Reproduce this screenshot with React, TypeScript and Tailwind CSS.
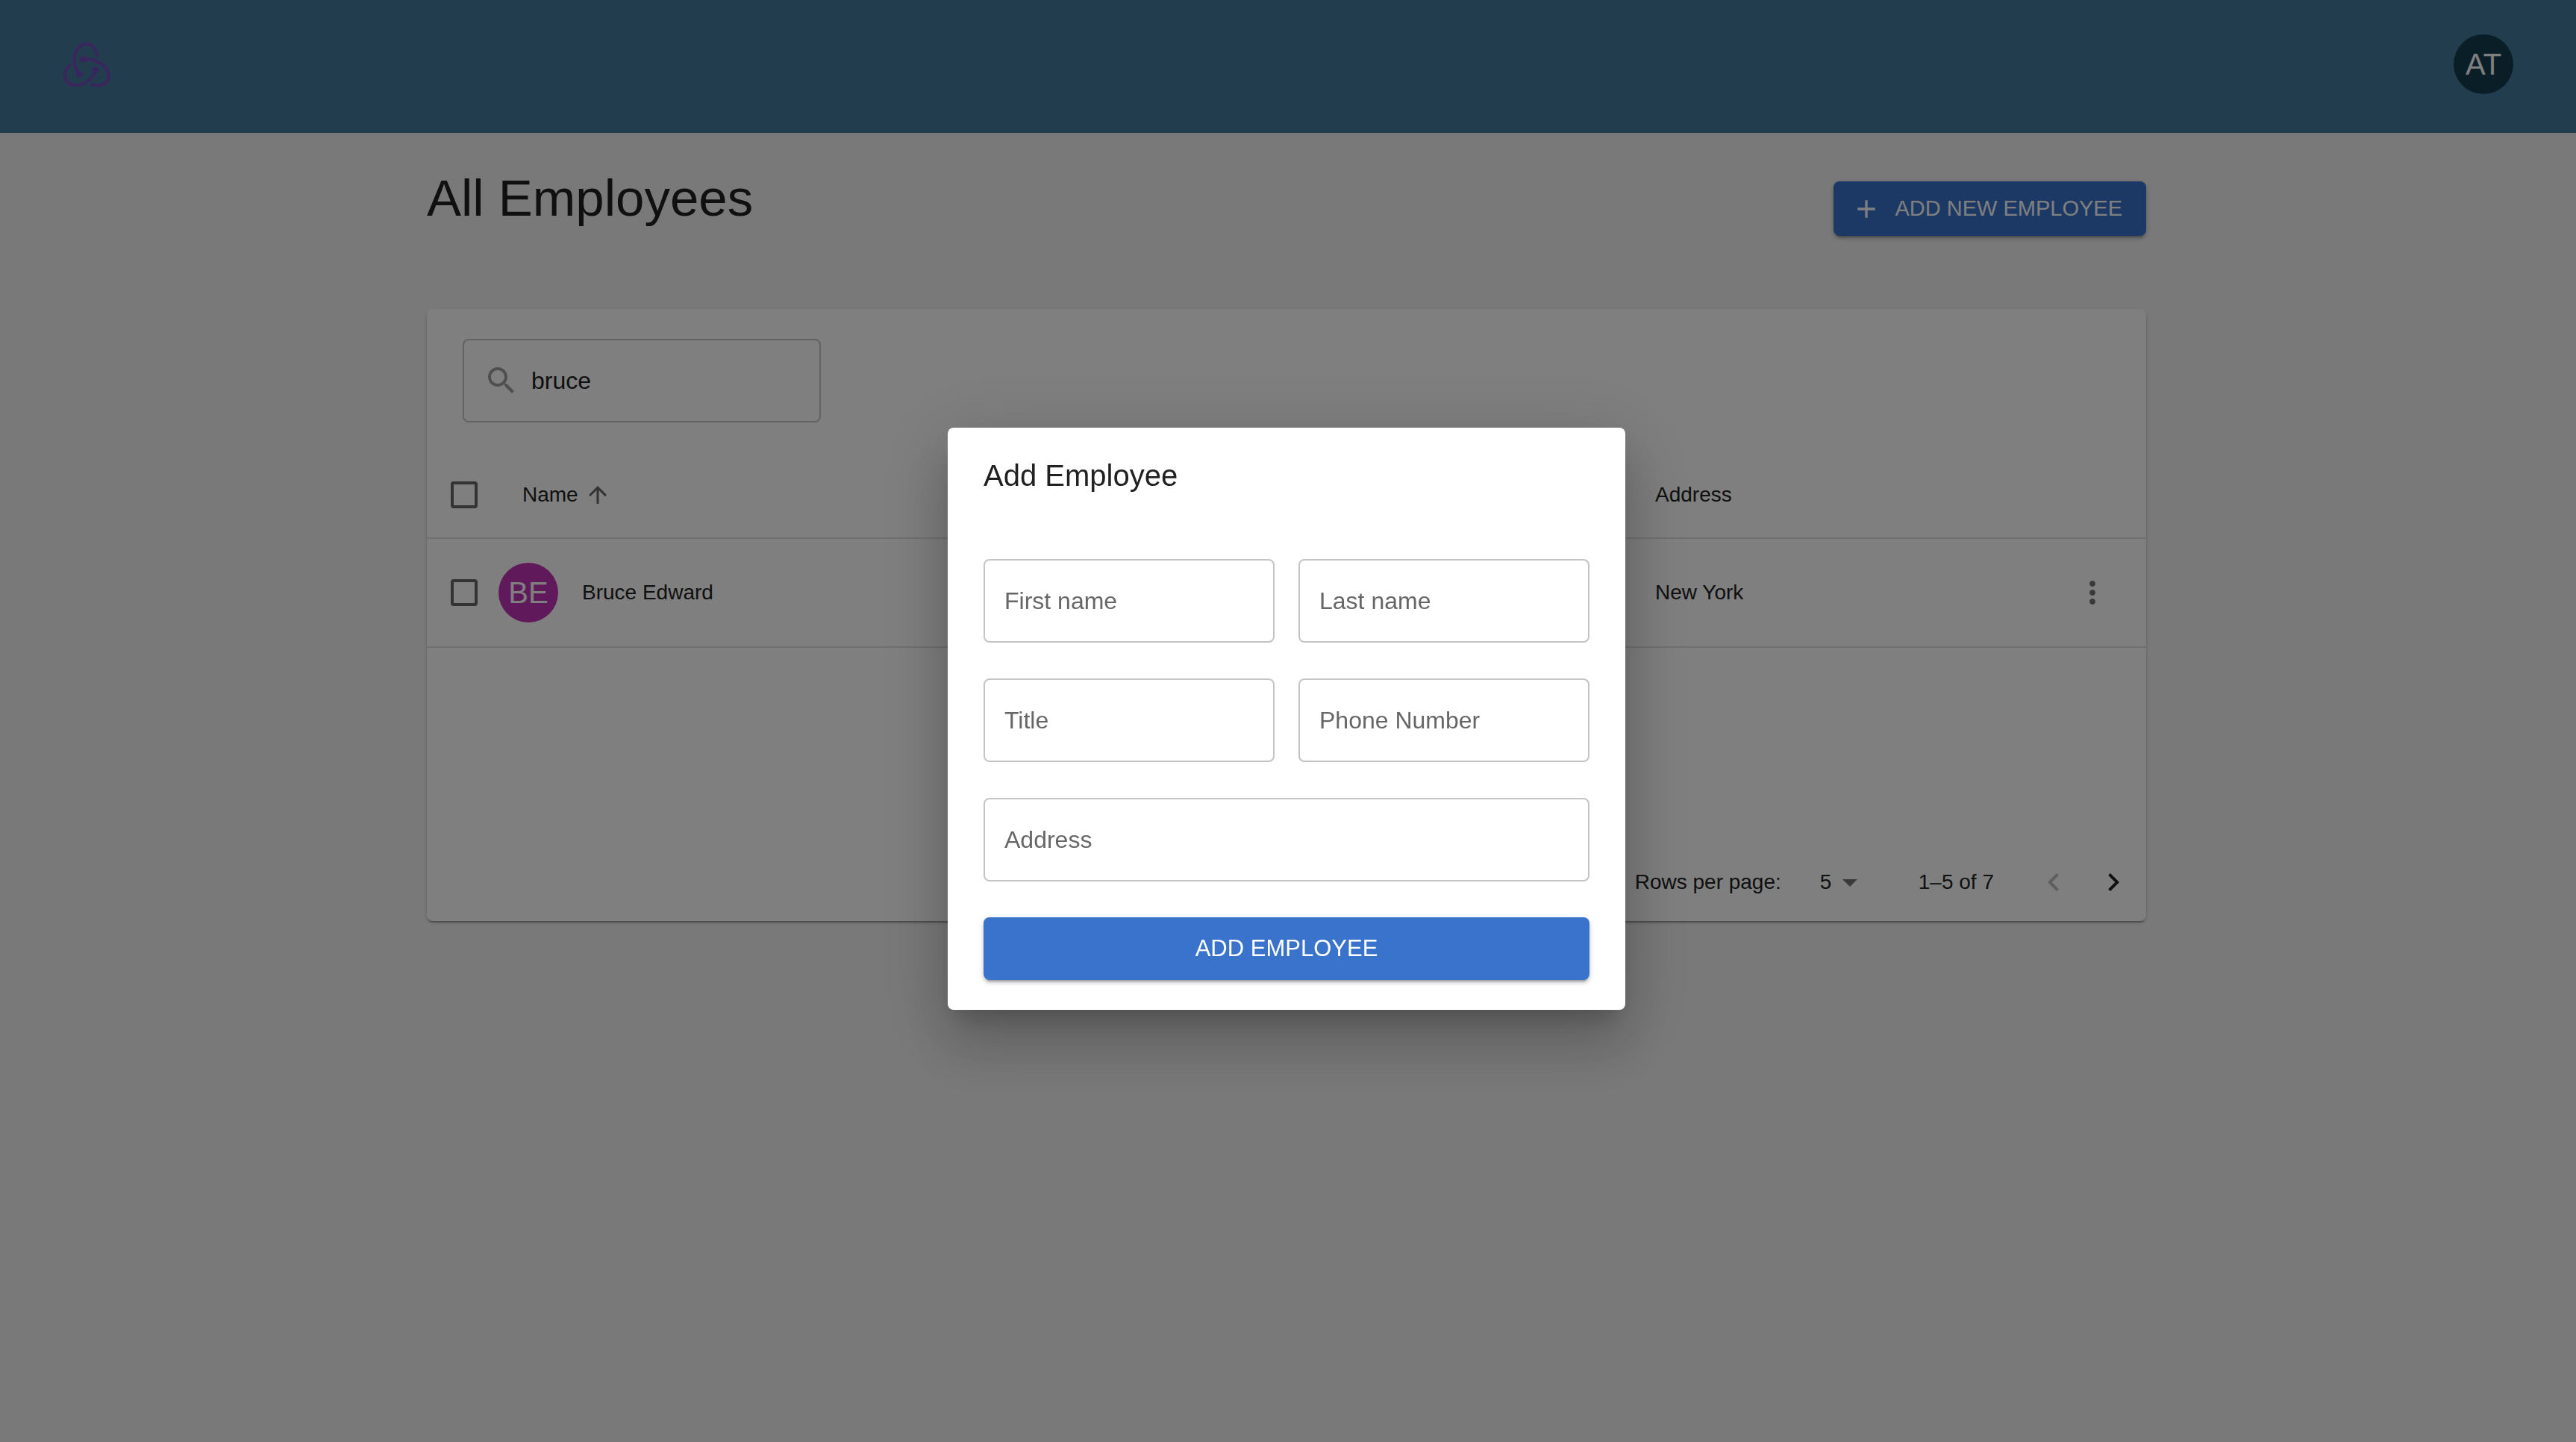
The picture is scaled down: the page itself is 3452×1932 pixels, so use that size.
import { useState } from "react";
import type { ReactNode } from "react";

type IconProps = { className: string; children: ReactNode };

function Icon({ className, children }: IconProps) {
  return (
    <svg viewBox="0 0 24 24" fill="currentColor" className={className} aria-hidden="true">
      {children}
    </svg>
  );
}

function Logo() {
  return (
    <svg viewBox="252 168 192 183" className="h-[61px] w-[64px] text-[#764abc]" aria-hidden="true">
      <g fill="none" stroke="currentColor" strokeWidth="12">
        <path d="M391 228C389 197 371 176 347 176C317 176 299 206 299 241C299 264 307 283 318 299" />
        <path d="M335 238C391 234 437 268 437 304C437 334 406 351 366 340" />
        <path d="M384 281C376 318 337 342 303 342C275 342 261 321 261 299C261 283 269 269 285 259" />
      </g>
      <g fill="currentColor">
        <circle cx="335" cy="238" r="13" />
        <circle cx="384" cy="281" r="13" />
        <circle cx="319" cy="299" r="13" />
      </g>
    </svg>
  );
}

function Header() {
  return (
    <header className="flex h-[178px] items-center justify-between bg-[#457a9d] px-[84px] pb-[6px]">
      <a href="#home" aria-label="Home">
        <Logo />
      </a>
      <button
        type="button"
        className="flex size-20 items-center justify-center rounded-full bg-[#153c4f] text-[40px] leading-none text-white"
      >
        AT
      </button>
    </header>
  );
}

function Checkbox({ label }: { label: string }) {
  return (
    <input
      type="checkbox"
      aria-label={label}
      className="block size-9 appearance-none rounded-[4px] border-4 border-[#666666] checked:bg-[#3973cc]"
    />
  );
}

function EmployeeTable() {
  return (
    <table className="w-full table-fixed border-collapse text-left text-[28px] leading-[40px] text-[#212121]">
      <colgroup>
        <col className="w-[96px]" />
        <col />
        <col className="w-[514px]" />
        <col className="w-[144px]" />
      </colgroup>
      <thead>
        <tr className="h-[115px] border-b-2 border-[#e0e0e0]">
          <th className="pl-8 font-normal">
            <Checkbox label="Select all employees" />
          </th>
          <th className="pl-8 font-normal" aria-sort="ascending">
            <button type="button" className="flex items-center gap-2">
              Name
              <Icon className="size-9 text-[#666666]">
                <path d="M4 12l1.41 1.41L11 7.83V20h2V7.83l5.58 5.59L20 12l-8-8-8 8z" />
              </Icon>
            </button>
          </th>
          <th className="font-normal">Address</th>
          <th aria-label="Actions" />
        </tr>
      </thead>
      <tbody>
        <tr className="h-[146px] border-b-2 border-[#e0e0e0]">
          <td className="pl-8">
            <Checkbox label="Select Bruce Edward" />
          </td>
          <td>
            <div className="flex items-center gap-8">
              <span className="flex size-20 items-center justify-center rounded-full bg-[#c034b8] text-[40px] leading-none text-white">
                BE
              </span>
              Bruce Edward
            </div>
          </td>
          <td>New York</td>
          <td>
            <button type="button" aria-label="More actions" className="mr-12 ml-auto block text-[#757575]">
              <Icon className="size-12">
                <path d="M12 8c1.1 0 2-.9 2-2s-.9-2-2-2-2 .9-2 2 .9 2 2 2zm0 2c-1.1 0-2 .9-2 2s.9 2 2 2 2-.9 2-2-.9-2-2-2zm0 6c-1.1 0-2 .9-2 2s.9 2 2 2 2-.9 2-2-.9-2-2-2z" />
              </Icon>
            </button>
          </td>
        </tr>
      </tbody>
    </table>
  );
}

function Pagination() {
  return (
    <div className="flex h-[104px] items-center justify-end pr-1 text-[28px] leading-[40px] text-[#212121]">
      <label htmlFor="rows">Rows per page:</label>
      <div className="relative ml-11 flex items-center">
        <select id="rows" defaultValue="5" className="w-18 appearance-none bg-transparent pl-2">
          <option>5</option>
          <option>10</option>
          <option>25</option>
        </select>
        <Icon className="pointer-events-none absolute right-0 size-12 text-[#757575]">
          <path d="M7 10l5 5 5-5z" />
        </Icon>
      </div>
      <span className="ml-17">1–5 of 7</span>
      <div className="ml-10 flex">
        <button type="button" disabled aria-label="Previous page" className="p-4 text-[#bdbdbd]">
          <Icon className="size-12">
            <path d="M15.41 16.59L10.83 12l4.58-4.59L14 6l-6 6 6 6 1.41-1.41z" />
          </Icon>
        </button>
        <button type="button" aria-label="Next page" className="p-4">
          <Icon className="size-12">
            <path d="M8.59 16.59L13.17 12 8.59 7.41 10 6l6 6-6 6-1.41-1.41z" />
          </Icon>
        </button>
      </div>
    </div>
  );
}

function Field({ label, className }: { label: string; className?: string }) {
  return (
    <input
      aria-label={label}
      placeholder={label}
      className={`h-28 w-full rounded-lg border-2 border-[#c4c4c4] px-[26px] text-[32px] text-[#212121] placeholder:text-[#666666] placeholder:opacity-100 ${className ?? ""}`}
    />
  );
}

function AddEmployeeDialog() {
  return (
    <div className="fixed inset-0 flex items-center justify-center bg-black/50 pr-1 pb-[6px]">
      <div
        role="dialog"
        aria-modal="true"
        aria-labelledby="dialog-title"
        className="w-[908px] rounded-lg bg-white px-12 pt-8 pb-10 shadow-[0_22px_30px_-14px_rgba(0,0,0,0.2),0_48px_76px_6px_rgba(0,0,0,0.14),0_18px_92px_16px_rgba(0,0,0,0.12)]"
      >
        <h2 id="dialog-title" className="text-[40px] leading-[64px] text-[#212121]">
          Add Employee
        </h2>
        <form className="mt-20 grid grid-cols-2 gap-x-8 gap-y-12" onSubmit={(e) => e.preventDefault()}>
          <Field label="First name" />
          <Field label="Last name" />
          <Field label="Title" />
          <Field label="Phone Number" />
          <Field label="Address" className="col-span-2" />
          <button
            type="submit"
            className="col-span-2 h-21 rounded-lg bg-[#3973cc] text-[31px] text-white uppercase shadow-[0_6px_2px_-4px_rgba(0,0,0,0.2),0_4px_4px_0_rgba(0,0,0,0.14),0_2px_10px_0_rgba(0,0,0,0.12)]"
          >
            Add Employee
          </button>
        </form>
      </div>
    </div>
  );
}

export default function App() {
  const [query, setQuery] = useState("bruce");

  return (
    <div className="min-h-screen bg-[#f3f3f3] font-['Liberation_Sans',Arial,sans-serif]">
      <Header />
      <main className="pr-1">
        <div className="mx-auto max-w-[2304px]">
          <div className="flex items-start justify-between">
            <h1 className="mt-11 text-[69px] leading-[88px] text-[#212121]">All Employees</h1>
            <button
              type="button"
              className="mt-[65px] flex h-[73px] items-center gap-[18px] rounded-lg bg-[#3973cc] px-8 text-[29px] text-white uppercase shadow-[0_6px_2px_-4px_rgba(0,0,0,0.2),0_4px_4px_0_rgba(0,0,0,0.14),0_2px_10px_0_rgba(0,0,0,0.12)]"
            >
              <Icon className="-ml-2 size-10">
                <path d="M19 13h-6v6h-2v-6H5v-2h6V5h2v6h6v2z" />
              </Icon>
              Add new employee
            </button>
          </div>
          <section className="mt-[98px] rounded-lg bg-white shadow-[0_4px_2px_-2px_rgba(0,0,0,0.2),0_2px_2px_0_rgba(0,0,0,0.14),0_2px_6px_0_rgba(0,0,0,0.12)]">
            <div className="px-12 pt-10">
              <label className="flex h-28 w-[480px] items-center gap-4 rounded-lg border-2 border-[#c4c4c4] px-[26px]">
                <Icon className="size-12 shrink-0 text-[#9e9e9e]">
                  <path d="M15.5 14h-.79l-.28-.27C15.41 12.59 16 11.11 16 9.5 16 5.91 13.09 3 9.5 3S3 5.91 3 9.5 5.91 16 9.5 16c1.61 0 3.09-.59 4.23-1.57l.27.28v.79l5 4.99L20.49 19l-4.99-5zm-6 0C7.01 14 5 11.99 5 9.5S7.01 5 9.5 5 14 7.01 14 9.5 11.99 14 9.5 14z" />
                </Icon>
                <input
                  aria-label="Search employees"
                  value={query}
                  onChange={(e) => setQuery(e.target.value)}
                  className="w-full min-w-0 bg-transparent text-[32px] text-[#212121] outline-none"
                />
              </label>
            </div>
            <div className="mt-10 min-h-[524px]">
              <EmployeeTable />
            </div>
            <Pagination />
          </section>
        </div>
      </main>
      <AddEmployeeDialog />
    </div>
  );
}
